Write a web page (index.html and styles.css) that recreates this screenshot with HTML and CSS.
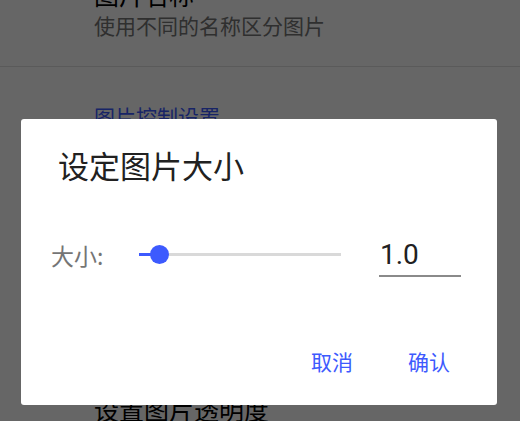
FILE: index.html
```html
<!DOCTYPE html>
<html lang="zh-CN">
<head>
<meta charset="utf-8">
<title>设定图片大小</title>
<link rel="stylesheet" href="styles.css">
</head>
<body>
<div class="screen">
  <div class="prefs">
    <div class="item">
      <div class="item-title">图片名称</div>
      <div class="item-summary">使用不同的名称区分图片</div>
    </div>
    <div class="divider"></div>
    <div class="category">图片控制设置</div>
    <div class="item item-late">
      <div class="item-title">设置图片透明度</div>
    </div>
  </div>
  <div class="scrim"></div>
  <div class="dialog" role="dialog">
    <div class="dialog-title">设定图片大小</div>
    <div class="size-row">
      <div class="size-label">大小:</div>
      <div class="slider">
        <div class="slider-track"></div>
        <div class="slider-fill"></div>
        <div class="slider-thumb"></div>
      </div>
      <div class="size-input">1.0</div>
    </div>
    <div class="actions">
      <button class="btn">取消</button>
      <button class="btn">确认</button>
    </div>
  </div>
</div>
</body>
</html>
```

FILE: styles.css
```css
html, body {
  margin: 0;
  padding: 0;
  background: #ffffff;
}

body {
  width: 520px;
  height: 421px;
  overflow: hidden;
  font-family: "Noto Sans CJK SC", "Noto Sans", sans-serif;
}

.screen {
  position: relative;
  width: 520px;
  height: 421px;
  overflow: hidden;
}

.prefs {
  margin-top: -23px;
}

.item {
  padding: 0 0 27px 94px;
}

.item-title {
  font-size: 25px;
  line-height: 34px;
  color: #000000;
}

.item-summary {
  font-size: 21px;
  line-height: 28px;
  color: #757575;
}

.divider {
  height: 1px;
  background: #e0e0e0;
}

.category {
  padding: 35px 0 0 94px;
  font-size: 21px;
  line-height: 28px;
  color: #3d5afe;
}

.item-late {
  margin-top: 262px;
}

.scrim {
  position: absolute;
  inset: 0;
  background: rgba(0, 0, 0, 0.6);
}

.dialog {
  position: absolute;
  left: 21px;
  top: 119px;
  width: 476px;
  box-sizing: border-box;
  padding: 26px 36px 30px 30px;
  background: #ffffff;
  border-radius: 3px;
}

.dialog-title {
  margin-left: 7px;
  font-size: 31px;
  line-height: 40px;
  color: #212121;
}

.size-row {
  display: flex;
  align-items: center;
  margin-top: 54px;
}

.size-label {
  width: 56px;
  flex: none;
  font-size: 23px;
  line-height: 30px;
  color: #757575;
  margin-bottom: 6px;
  white-space: nowrap;
}

.slider {
  position: relative;
  flex: 1;
  height: 20px;
  margin: 0 38px 8px 32px;
}

.slider-track {
  position: absolute;
  left: 0;
  right: 0;
  top: 9px;
  height: 3px;
  background: #d9d9d9;
}

.slider-fill {
  position: absolute;
  left: 0;
  width: 20px;
  top: 9px;
  height: 3px;
  background: #3d5afe;
}

.slider-thumb {
  position: absolute;
  left: 11px;
  top: 1px;
  width: 19px;
  height: 19px;
  border-radius: 50%;
  background: #3d5afe;
}

.size-input {
  width: 82px;
  flex: none;
  box-sizing: border-box;
  padding: 0 0 4px 1px;
  font-family: Roboto, "Liberation Sans", sans-serif;
  font-size: 28px;
  line-height: 32px;
  color: #212121;
  border-bottom: 2px solid #8a8a8a;
}

.actions {
  display: flex;
  justify-content: flex-end;
  gap: 55px;
  margin: 70px 11px 0 0;
}

.btn {
  padding: 0;
  border: 0;
  background: none;
  font-family: "Noto Sans CJK SC", "Noto Sans", sans-serif;
  font-size: 21px;
  line-height: 28px;
  color: #3d5afe;
}
```
